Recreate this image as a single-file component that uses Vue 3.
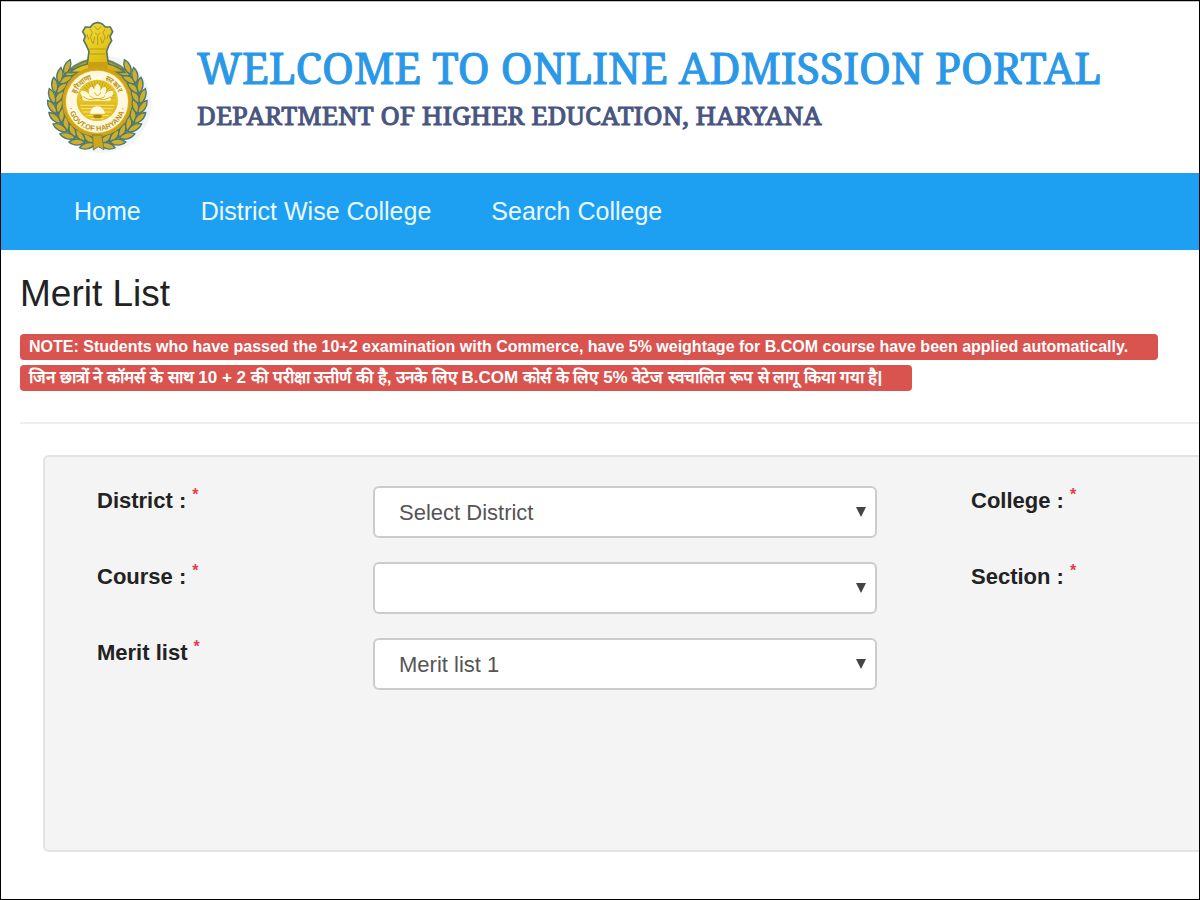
<template>
  <div class="page">
    <header class="header">
      <svg class="emblem" viewBox="0 0 420 450" role="img" aria-label="Govt. of Haryana">
        <defs>
          <linearGradient id="gold" x1="0" y1="0" x2="1" y2="1">
            <stop offset="0" stop-color="#f0e04e" />
            <stop offset="0.5" stop-color="#e6c920" />
            <stop offset="1" stop-color="#cda40e" />
          </linearGradient>
          <path id="arc-top" d="M134 275 A68 68 0 0 1 270 275" />
          <path id="arc-bottom" d="M113 275 A88 88 0 0 0 289 275" />
        </defs>

        <ellipse class="shade" cx="216" cy="282" rx="148" ry="146" />

        <!-- wreath -->
        <circle class="stem" cx="202" cy="274" r="126" />
        <path
          v-for="(leaf, i) in leaves"
          :key="i"
          class="leaf"
          d="M0 22 C-12 10 -12 -12 0 -26 C12 -12 12 10 0 22 Z"
          :transform="leaf"
        />

        <!-- lion capital -->
        <path
          class="capital"
          d="M172 162 L177 124 L168 104 L161 91 L166 79 L158 65 L166 51 L180 52 L190 41 L203 37 L216 41 L226 51 L241 51 L248 65 L240 80 L245 92 L237 105 L230 124 L235 162 C252 166 270 174 284 187 L119 187 C135 174 154 166 172 162 Z"
        />
        <path
          class="engrave"
          d="M181 57 L187 68 L181 82 L188 100 M225 57 L219 68 L225 82 L218 100 M193 49 L203 60 L213 49 M195 68 L203 75 L211 68 M203 77 V105 M194 81 L190 101 M212 81 L216 101 M171 72 L176 88 M235 72 L230 88 M178 117 H229 M181 132 H226"
        />
        <path class="plinth" d="M174 156 H233 V178 H174 Z" />

        <!-- seal -->
        <circle class="rim" cx="201" cy="275" r="100" />
        <circle class="band" cx="201" cy="275" r="93" />
        <circle class="disc" cx="202" cy="271" r="62" />
        <path v-for="a in rays" :key="a" class="ray" d="M202 254 V212" :transform="`rotate(${a} 202 264)`" />
        <path class="field" d="M141 277 H263 C261 303 238 332 202 332 C166 332 143 303 141 277 Z" />
        <path
          class="petal"
          d="M158 260 C148 250 151 242 157 242 C166 241 174 248 179 254 C173 241 177 232 184 230 C189 230 193 237 194 244 C191 232 197 225 203 221 C210 226 214 233 211 245 C215 234 220 229 226 232 C231 235 229 246 224 254 C232 244 243 239 250 245 C252 251 247 258 239 263 C246 265 244 271 237 272 H166 C160 271 154 266 158 260 Z"
        />
        <path class="petal-line" d="M180 257 C188 270 215 270 225 257 M194 247 C197 259 208 259 212 247 M160 260 C176 272 191 269 202 265 C219 272 233 267 241 260" />
        <path class="ripple" d="M151 286 H253 M153 296 H188 M218 296 H249 M158 306 H185 M221 306 H245 M168 317 H237 M181 326 H222" />
        <path class="mound" d="M180 311 C181 298 190 289 202 289 C214 289 222 299 225 311 Z" />
        <path class="base" d="M188 317 C195 313 211 313 217 317 L211 325 H195 Z" />
        <text class="seal-text"><textPath href="#arc-top" startOffset="27%">हरियाणा</textPath></text>
        <text class="seal-text"><textPath href="#arc-top" startOffset="74%">सरकार</textPath></text>
        <text class="seal-text"><textPath href="#arc-bottom" startOffset="50%">· GOVT.OF HARYANA ·</textPath></text>

        <!-- tie of the wreath -->
        <path class="knot" d="M188 375 L215 375 L222 419 L205 410 L190 420 Z" />
      </svg>
      <div class="titles">
        <h1>WELCOME TO ONLINE ADMISSION PORTAL</h1>
        <h2>DEPARTMENT OF HIGHER EDUCATION, HARYANA</h2>
      </div>
    </header>

    <nav class="nav">
      <a v-for="item in menu" :key="item" href="#">{{ item }}</a>
    </nav>

    <main class="content">
      <h3>Merit List</h3>
      <div class="notes">
        <p class="note">
          NOTE: Students who have passed the 10+2 examination with Commerce, have 5% weightage for B.COM course have been applied automatically.
        </p>
        <p class="note hindi" lang="hi">
          जिन छात्रों ने कॉमर्स के साथ 10 + 2 की परीक्षा उत्तीर्ण की है, उनके लिए B.COM कोर्स के लिए 5% वेटेज स्वचालित रूप से लागू किया गया है|
        </p>
      </div>
      <hr />

      <form class="panel" @submit.prevent>
        <template v-for="field in fields" :key="field.id">
          <label :for="field.id">{{ field.label }} <sup>*</sup></label>
          <div class="select">
            <select :id="field.id" v-model="field.value">
              <option :value="field.value">{{ field.value }}</option>
            </select>
            <svg class="arrow" viewBox="0 0 10 10" aria-hidden="true"><path d="M0 0 H10 L5 10 Z" /></svg>
          </div>
          <span class="side">
            <template v-if="field.side">{{ field.side }} <sup>*</sup></template>
          </span>
        </template>
      </form>
    </main>
  </div>
</template>

<script setup>
import { reactive } from 'vue'

const menu = ['Home', 'District Wise College', 'Search College']

const fields = reactive([
  { id: 'district', label: 'District :', value: 'Select District', side: 'College :' },
  { id: 'course', label: 'Course :', value: '', side: 'Section :' },
  { id: 'merit', label: 'Merit list', value: 'Merit list 1', side: '' },
])

// Leaves run up both sides of the wreath, in an outer and an inner row
const leaves = []
for (let a = 12; a <= 144; a += 14) {
  for (const side of [-1, 1]) {
    for (const [r, tilt] of [[116, 26], [136, -26]]) {
      const rad = (a * Math.PI) / 180
      const x = 202 + side * r * Math.sin(rad)
      const y = 274 + r * Math.cos(rad)
      const turn = side * (90 - a - tilt)
      leaves.push(`translate(${x.toFixed(1)} ${y.toFixed(1)}) rotate(${turn})`)
    }
  }
}

const rays = Array.from({ length: 19 }, (_, i) => (i - 9) * 10)
</script>

<style>
body {
  margin: 0;
  background: #fff;
}
</style>

<style scoped>
.page {
  box-sizing: border-box;
  min-height: 100vh;
  border: 1px solid #000;
  background: #fff;
  color: #222;
  font-family: "Liberation Sans", Arial, sans-serif;
  overflow: hidden;
}
.header {
  display: flex;
  align-items: flex-start;
  box-sizing: border-box;
  height: 172px;
  padding: 8px 0 0 29px;
  border-top: 1px solid #cbc3c9;
}
.emblem {
  flex: none;
  width: 140px;
  height: 150px;
}
.titles {
  padding: 30px 0 0 27px;
  font-family: "Noto Serif", "Droid Serif", "DejaVu Serif Condensed", "DejaVu Serif", serif;
  white-space: nowrap;
}
h1,
h2,
h3,
p {
  margin: 0;
}
h1 {
  color: #2a98e6;
  font-size: 43px;
  font-weight: 400;
  line-height: 55px;
  -webkit-text-stroke: 1px #2a98e6;
}
h2 {
  color: #485581;
  font-size: 26px;
  font-weight: 400;
  line-height: 40px;
  -webkit-text-stroke: 1px #485581;
}
.nav {
  display: flex;
  gap: 60px;
  padding: 0 73px;
  background: #1d9ff2;
}
.nav a {
  color: #eafaff;
  font-size: 25px;
  line-height: 77px;
  text-decoration: none;
}
.content {
  padding-left: 19px;
}
h3 {
  padding-top: 21px;
  font-size: 37px;
  font-weight: 400;
  line-height: 46px;
}
.notes {
  display: flex;
  flex-direction: column;
  align-items: flex-start;
  gap: 5px;
  padding-top: 17px;
}
.note {
  padding: 0 30px 0 9px;
  border-radius: 4px;
  background: #d9534f;
  color: #fff;
  font-size: 16px;
  font-weight: 700;
  line-height: 26px;
  white-space: nowrap;
}
.note.hindi {
  font-size: 17px;
}
hr {
  margin: 31px 0;
  border: 0;
  border-top: 2px solid #eee;
}
.panel {
  display: grid;
  grid-template-columns: 276px minmax(0, 504px) 1fr;
  align-content: start;
  row-gap: 24px;
  box-sizing: border-box;
  min-height: 397px;
  margin-left: 23px;
  padding: 29px 0 29px 52px;
  border: 2px solid #e3e3e3;
  border-right: 0;
  border-radius: 6px 0 0 6px;
  background: #f4f4f4;
}
label,
.side {
  font-size: 22px;
  font-weight: 700;
  line-height: 30px;
}
.side {
  padding-left: 94px;
}
sup {
  color: #e0404a;
  font-size: 16px;
  line-height: 0;
}
.select {
  position: relative;
}
select {
  display: block;
  box-sizing: border-box;
  width: 100%;
  height: 52px;
  padding: 0 24px;
  border: 2px solid #ccc;
  border-radius: 6px;
  background: #fff;
  color: #555;
  font-family: inherit;
  font-size: 22px;
  appearance: none;
}
.arrow {
  position: absolute;
  top: 21px;
  right: 11px;
  width: 10px;
  height: 10px;
  fill: #444;
  pointer-events: none;
}

.shade {
  fill: #dfe6ee;
  opacity: 0.4;
}
.stem {
  fill: #b8a52c;
  stroke: #6f8658;
  stroke-width: 7;
}
.leaf {
  fill: #ccb02c;
  stroke: #4d7772;
  stroke-width: 4;
}
.capital {
  fill: url(#gold);
  stroke: #56795f;
  stroke-width: 5;
}
.engrave {
  fill: none;
  stroke: #b39c16;
  stroke-width: 3;
}
.plinth {
  fill: #c9a012;
}
.rim {
  fill: #deb51a;
  stroke: #d0a214;
  stroke-width: 8;
}
.band {
  fill: #fdf8df;
}
.disc {
  fill: #e6c426;
}
.ray {
  stroke: #c4a318;
  stroke-width: 3;
}
.field {
  fill: #e3bd1f;
}
.petal {
  fill: #fff9d8;
}
.petal-line {
  fill: none;
  stroke: #d2ad24;
  stroke-width: 3;
}
.ripple {
  stroke: #f4e37a;
  stroke-width: 3;
}
.mound {
  fill: #fffbe0;
}
.base {
  fill: #a5850e;
}
.seal-text {
  fill: #b8920f;
  font-size: 22px;
  font-weight: 700;
  text-anchor: middle;
}
.knot {
  fill: #cfa51a;
  stroke: #6b8260;
  stroke-width: 3;
}
</style>
